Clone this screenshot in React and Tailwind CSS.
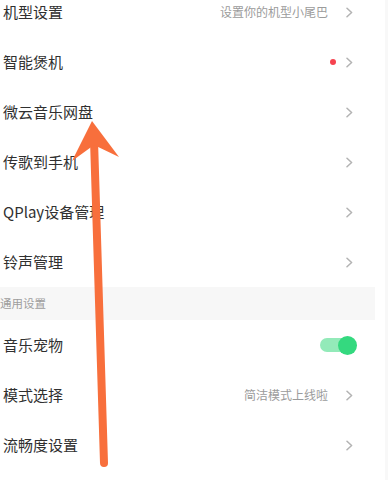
const topRows = [
  { label: '机型设置', hint: '设置你的机型小尾巴' },
  { label: '智能煲机', dot: true },
  { label: '微云音乐网盘' },
  { label: '传歌到手机' },
  { label: 'QPlay设备管理' },
  { label: '铃声管理' },
]

function Chevron() {
  return (
    <svg width="7" height="11" viewBox="0 0 7 11" fill="none">
      <path d="M1 1.2L5.6 5.5L1 9.8" stroke="#b3b3b3" strokeWidth="1.5" strokeLinecap="round" strokeLinejoin="round" />
    </svg>
  )
}

function Row({ label, hint, dot, toggle }) {
  return (
    <div className="flex h-[50px] w-[375px] items-center justify-between pl-[3px] pr-[22px]">
      <span className="text-[15px] text-[#303030]">{label}</span>
      {toggle ? (
        <div className="relative mr-[-4px] flex h-[19px] w-[37px] items-center">
          <div className="h-[14px] w-[34px] rounded-full bg-[#93eab9]" />
          <div className="absolute right-0 h-[19px] w-[19px] rounded-full bg-[#34d97f]" />
        </div>
      ) : (
        <div className="flex items-center">
          {hint && <span className="mr-[18px] text-[12px] text-[#9b9b9b]">{hint}</span>}
          {dot && <span className="mr-[10px] h-[6px] w-[6px] rounded-full bg-[#f6434f]" />}
          <Chevron />
        </div>
      )}
    </div>
  )
}

export default function App() {
  return (
    <div
      className="relative flex h-[480px] w-[388px] overflow-hidden bg-white"
      style={{ fontFamily: '"Noto Sans CJK SC", "Noto Sans", sans-serif' }}
    >
      <div className="mt-[-13px] w-[385px] bg-white">
        {topRows.map(r => <Row key={r.label} {...r} />)}
        <div className="flex h-[33px] w-[375px] items-center bg-[#f7f7f7]">
          <span className="text-[11.5px] text-[#9e9e9e]">通用设置</span>
        </div>
        <Row label="音乐宠物" toggle />
        <Row label="模式选择" hint="简洁模式上线啦" />
        <Row label="流畅度设置" />
      </div>
      <div className="flex-1 bg-[#f8f8f8]" />

      <svg className="pointer-events-none absolute left-0 top-0" width="388" height="480" viewBox="0 0 388 480">
        <line x1="94" y1="140" x2="104" y2="463" stroke="#f86f3c" strokeWidth="8" strokeLinecap="round" />
        <polygon points="92,121 72,161 94,145 119,157" fill="#f86f3c" />
      </svg>
    </div>
  )
}
